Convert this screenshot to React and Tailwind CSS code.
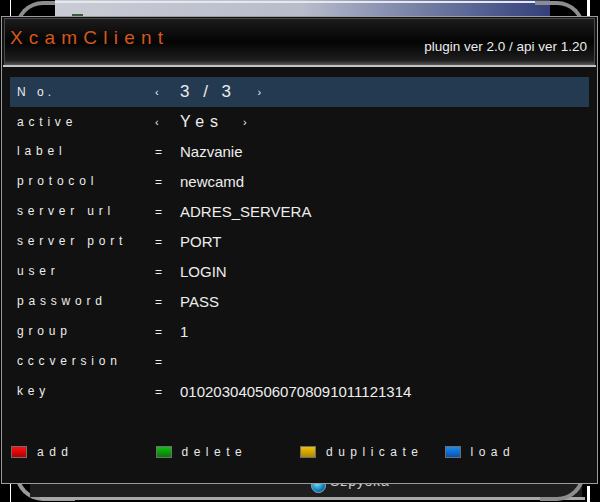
import React from "react";

const F = { fontFamily: '"Liberation Sans", Arial, sans-serif' };

const rows = [
  { k: "label", v: "Nazvanie" },
  { k: "protocol", v: "newcamd" },
  { k: "server url", v: "ADRES_SERVERA" },
  { k: "server port", v: "PORT" },
  { k: "user", v: "LOGIN" },
  { k: "password", v: "PASS" },
  { k: "group", v: "1" },
  { k: "cccversion", v: "" },
  { k: "key", v: "0102030405060708091011121314" },
];

function Key({ from, to, label }) {
  return (
    <div className="flex items-center w-[145px]">
      <div
        className="w-[16px] h-[12px] border border-[#6e6e6e]"
        style={{ background: `linear-gradient(to bottom, ${from}, ${to})` }}
      />
      <span className="ml-[10px] text-[12px] tracking-[5.5px] text-[#e8e8e8]">{label}</span>
    </div>
  );
}

export default function App() {
  return (
    <div className="relative w-[600px] h-[502px] bg-black overflow-hidden" style={F}>
      {/* background window (behind) */}
      <div className="absolute left-[10px] top-0 w-px h-[16px] bg-white" />
      <div className="absolute left-[15px] top-[1px] w-[60px] h-[40px] rounded-tl-[28px] border-l-[4px] border-t-[4px] border-[#8d8d8d]" />
      <div className="absolute left-[55px] top-0 w-[495px] h-[16px] bg-gradient-to-r from-[#c9ccd4] via-[#b8bccb] to-[#34407a]" />
      <div className="absolute left-[55px] top-[1px] w-[495px] h-[2px] bg-[#e6e8ee]" />
      <div className="absolute left-[72px] top-[14px] w-[11px] h-[2px] bg-[#3c5a3c]" />
      <div className="absolute left-[535px] top-[1px] w-[50px] h-[40px] rounded-tr-[28px] border-r-[4px] border-t-[4px] border-[#8d8d8d]" />
      <div className="absolute left-[587px] top-0 w-[3px] h-[16px] bg-white" />

      <div className="absolute left-[10px] top-[484px] w-px h-[18px] bg-white" />
      <div className="absolute left-[15px] top-[460px] w-[60px] h-[41px] rounded-bl-[28px] border-l-[4px] border-b-[4px] border-[#9a9a9a]" />
      <div className="absolute left-[30px] top-[484px] w-[552px] h-[13px] bg-[#1e1e1e]" />
      <div className="absolute left-[40px] top-[497px] w-[545px] h-[3px] bg-[#a8a8a8]" />
      <div className="absolute left-[540px] top-[460px] w-[45px] h-[41px] rounded-br-[28px] border-r-[4px] border-b-[4px] border-[#8d8d8d]" />
      <div className="absolute left-[587px] top-[486px] w-[3px] h-[16px] bg-white" />
      <div
        className="absolute left-[311px] top-[478px] w-[15px] h-[15px] rounded-full border border-[#9ad]"
        style={{ background: "radial-gradient(circle at 40% 35%, #7ee0ff, #0a7fb5 60%, #03324a)" }}
      />
      <div className="absolute left-[330px] top-[471px] text-[14px] text-[#cfcfcf] tracking-[1px]">Szpyska</div>

      {/* main panel */}
      <div className="relative z-10 ml-[1px] mt-[16px] w-[597px] h-[468px] border border-[#9c9c9c] bg-[#111111] flex flex-col">
        <div className="mx-[2px] mt-[1px] h-[47px] border border-[#4a4a4a] border-b-0 flex items-start justify-between pl-[5px] pr-[6px] bg-gradient-to-b from-[#1c1c1c] via-[#050505] to-[#262626] relative">
          <div className="mt-[5px] text-[19px] tracking-[6.2px] text-[#d4571c]">XcamClient</div>
          <div className="mt-[18px] mr-[1px] text-[13.5px] text-[#ececec]">plugin ver 2.0 / api ver 1.20</div>
          <div className="absolute left-0 right-0 bottom-0 h-[5px] bg-gradient-to-b from-[#1a1a1a] to-[#5a5a5a]" />
        </div>
        <div className="h-[2px] bg-[#c4c4c4] mx-[1px]" />

        <div className="flex flex-col px-[8px] pt-[10px] text-[#ededed]">
          <div className="flex items-center h-[30px] bg-[#233a50] pl-[7px]">
            <div className="w-[138px] text-[12px] tracking-[4px]">N o.</div>
            <div className="text-[11px] w-[25px]">‹</div>
            <div className="text-[17px] tracking-[4.5px]">3 / 3</div>
            <div className="text-[11px] ml-[22px]">›</div>
          </div>
          <div className="flex items-center h-[30px] pl-[7px]">
            <div className="w-[138px] text-[12px] tracking-[4.8px]">active</div>
            <div className="text-[11px] w-[25px]">‹</div>
            <div className="text-[16px] tracking-[6px]">Yes</div>
            <div className="text-[11px] ml-[19px]">›</div>
          </div>
          {rows.map((r) => (
            <div key={r.k} className="flex items-center h-[30px] pl-[7px]">
              <div className="w-[138px] text-[12px] tracking-[4.8px] -mt-[3px]">{r.k}</div>
              <div className="w-[25px] text-[12px]">=</div>
              <div className="text-[15px]">{r.v}</div>
            </div>
          ))}
          <div className="flex items-center h-[30px] mt-[30px] pl-[1px]">
            <Key from="#ff1010" to="#b00000" label="add" />
            <Key from="#10c010" to="#087808" label="delete" />
            <Key from="#f0c000" to="#b08800" label="duplicate" />
            <Key from="#1a8cf0" to="#0a50b0" label="load" />
          </div>
        </div>
      </div>
    </div>
  );
}
